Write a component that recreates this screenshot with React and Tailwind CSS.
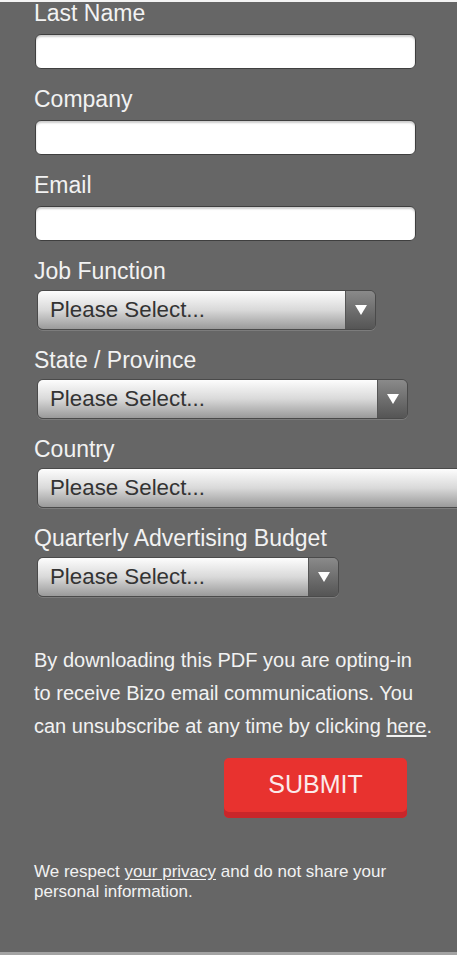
import React from 'react'

const textFields = ["Last Name", "Company", "Email"]

const selectFields = [
    { label: "Job Function", width: "w-[339px]", arrow: true },
    { label: "State / Province", width: "w-[371px]", arrow: true },
    { label: "Country", width: "w-[440px]", arrow: false },
    { label: "Quarterly Advertising Budget", width: "w-[302px]", arrow: true },
]

function FakeSelect({ width, arrow }) {
    return (
        <div className={`ml-[3px] flex h-[40px] ${width} overflow-hidden rounded-[6px] border border-[#4a4a4a] shadow-[0_1px_0_rgba(255,255,255,0.15)]`}>
            <div className='flex flex-1 items-center bg-gradient-to-b from-[#fdfdfd] via-[#d9d9d9] to-[#9a9a9a] pl-[12px] text-[22.3px] leading-none text-[#333333]'>
                Please Select...
            </div>
            {arrow && (
                <div className='flex w-[30px] items-center justify-center border-l border-[#555] bg-gradient-to-b from-[#8a8a8a] to-[#555555]'>
                    <svg width="14" height="12" viewBox="0 0 14 12">
                        <path d="M1 1 L13 1 L7 11 Z" fill="#ffffff" />
                    </svg>
                </div>
            )}
        </div>
    )
}

export default function App() {
    return (
        <div className='h-[955px] w-[457px] overflow-hidden bg-[#666666] font-["Liberation_Sans",Arial,sans-serif]'>
            <div className='h-[2px] bg-[#f4f4f4]'></div>
            <div className='flex h-[950px] flex-col px-[34px]'>
                {/* text inputs */}
                {textFields.map((label, i) => (
                    <div key={i} className={`flex flex-col ${i === 0 ? '-mt-[2px]' : ''} pb-[17px]`}>
                        <div className='h-[26px] text-[23px] leading-[26px] text-[#f2f2f2]'>{label}</div>
                        <div className='ml-[1px] mt-[8px] h-[35px] w-[381px] rounded-[6px] border border-[#3f3f3f] bg-white shadow-[inset_0_2px_2px_rgba(0,0,0,0.2)]'></div>
                    </div>
                ))}

                {/* selects */}
                {selectFields.map((f, i) => (
                    <div key={i} className='flex flex-col pb-[17px]'>
                        <div className='h-[26px] text-[23px] leading-[26px] text-[#f2f2f2]'>{f.label}</div>
                        <div className='mt-[6px]'>
                            <FakeSelect width={f.width} arrow={f.arrow} />
                        </div>
                    </div>
                ))}

                <p className='mt-[30px] w-[410px] shrink-0 whitespace-nowrap text-[20px] leading-[33px] text-[#f2f2f2]'>
                    By downloading this PDF you are opting-in<br />
                    to receive Bizo email communications. You<br />
                    can unsubscribe at any time by clicking <span className='underline underline-offset-2'>here</span>.
                </p>

                <div className='mt-[15px] ml-[190px] flex h-[60px] w-[183px] items-center justify-center rounded-[5px] bg-[#e8322f] pb-[6px] text-[25px] text-[#fbeaea] shadow-[inset_0_-6px_0_#c9262a]'>
                    SUBMIT
                </div>

                <p className='mt-[44px] text-[17px] leading-[20px] text-[#f2f2f2]'>
                    We respect <span className='underline underline-offset-2'>your privacy</span> and do not share your personal information.
                </p>
            </div>
            <div className='h-[3px] bg-[#a3a3a3]'></div>
        </div>
    )
}
